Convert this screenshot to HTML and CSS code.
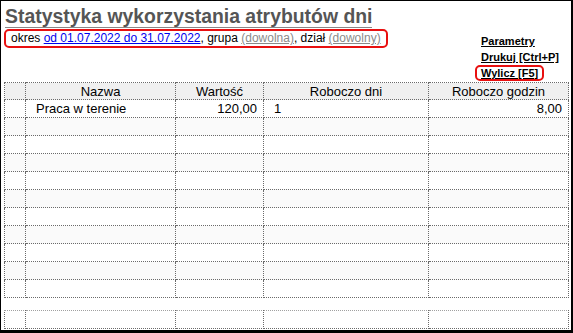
FILE: index.html
```html
<!DOCTYPE html>
<html lang="pl">
<head>
    <meta charset="UTF-8">
    <title>Statystyka wykorzystania atrybutów dni</title>
    <link rel="stylesheet" href="styles.css">
</head>
<body>
    <div class="window">
        <div class="top">
            <div class="head">
                <h1 class="title">Statystyka wykorzystania atrybutów dni</h1>
                <div class="filter">
                    okres <a class="link" href="#">od 01.07.2022 do 31.07.2022</a>, grupa <a class="muted" href="#">(dowolna)</a>, dział <a class="muted" href="#">(dowolny)</a>
                </div>
            </div>
            <div class="actions">
                <a href="#">Parametry</a>
                <a href="#">Drukuj [Ctrl+P]</a>
                <a href="#" class="marked">Wylicz [F5]</a>
            </div>
        </div>

        <table class="grid">
            <colgroup>
                <col style="width:21px"><col style="width:150px"><col style="width:88px"><col style="width:165px"><col style="width:140px">
            </colgroup>
            <thead>
                <tr><th></th><th>Nazwa</th><th>Wartość</th><th>Roboczo dni</th><th>Roboczo godzin</th></tr>
            </thead>
            <tbody>
                <tr><td></td><td class="name">Praca w terenie</td><td class="num">120,00</td><td class="name">1</td><td class="num">8,00</td></tr>
                <tr><td></td><td></td><td></td><td></td><td></td></tr>
                <tr><td></td><td></td><td></td><td></td><td></td></tr>
                <tr><td></td><td></td><td></td><td></td><td></td></tr>
                <tr><td></td><td></td><td></td><td></td><td></td></tr>
                <tr><td></td><td></td><td></td><td></td><td></td></tr>
                <tr><td></td><td></td><td></td><td></td><td></td></tr>
                <tr><td></td><td></td><td></td><td></td><td></td></tr>
                <tr><td></td><td></td><td></td><td></td><td></td></tr>
                <tr><td></td><td></td><td></td><td></td><td></td></tr>
                <tr><td></td><td></td><td></td><td></td><td></td></tr>
            </tbody>
        </table>

        <table class="grid footer">
            <colgroup>
                <col style="width:21px"><col style="width:150px"><col style="width:88px"><col style="width:165px"><col style="width:140px">
            </colgroup>
            <tr><td></td><td></td><td></td><td></td><td></td></tr>
        </table>
    </div>
</body>
</html>
```

FILE: styles.css
```css
html, body {
    margin: 0;
    background: #ffffff;
}
.window {
    width: 573px;
    height: 333px;
    box-sizing: border-box;
    border-style: solid;
    border-color: #000000;
    border-width: 1px 2px 3px 1px;
    padding: 0 0 0 3px;
    font-family: 'Liberation Sans', Arial, sans-serif;
    font-size: 13px;
    color: #000000;
}
.top {
    display: flex;
    justify-content: space-between;
    height: 81px;
}
.title {
    margin: 4px 0 0 1px;
    font-size: 19.4px;
    line-height: 22px;
    color: #555555;
    display: inline-block;
    border-bottom: 1px solid #888888;
}
.filter {
    width: 375px;
    height: 15px;
    margin-top: 1px;
    padding: 0 0 0 5px;
    font-size: 12px;
    line-height: 15px;
    white-space: nowrap;
    border: 2px solid #e81010;
    border-radius: 5px;
}
.link {
    color: #0000ee;
}
.muted {
    color: #8a8a8a;
}
.actions {
    display: flex;
    flex-direction: column;
    align-items: flex-start;
    padding-top: 32px;
    width: 90px;
}
.actions a {
    font-size: 11px;
    font-weight: bold;
    color: #000000;
    line-height: 12px;
    padding: 0 4px;
    border: 2px solid transparent;
    margin-left: -6px;
}
.actions a.marked {
    border-color: #e81010;
    border-radius: 5px;
}
.grid {
    border-collapse: collapse;
    table-layout: fixed;
    width: 564px;
}
.grid th, .grid td {
    height: 17px;
    padding: 0;
    border: 1px dotted #6a6a6a;
    font-weight: normal;
    line-height: 15px;
}
.grid th {
    height: 16px;
    background: #f0f0f0;
    text-align: center;
}
.grid tbody tr:nth-child(even) td {
    background: #fafafa;
}
.grid .name {
    padding-left: 10px;
}
.grid .num {
    text-align: right;
    padding-right: 6px;
}
.footer {
    margin-top: 12px;
}
.footer td {
    border-top-color: #a0a0a0;
}
```
